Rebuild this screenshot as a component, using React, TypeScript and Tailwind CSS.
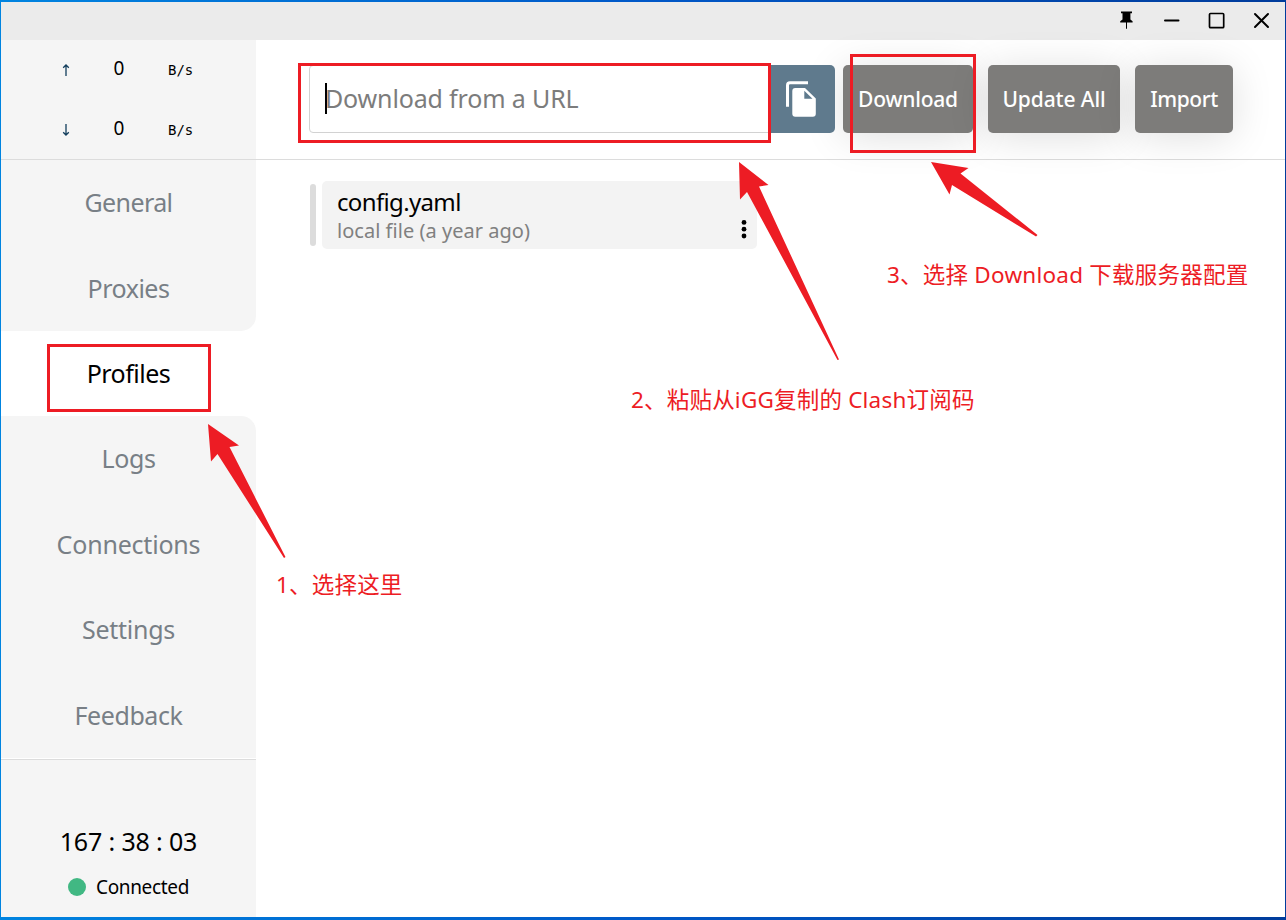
import React from "react";

const NAV = [
  { label: "General", cls: "tracking-[-0.6px]" },
  { label: "Proxies", cls: "rounded-br-[15px] tracking-[-0.5px]" },
  { label: "Profiles", cls: "tracking-[-0.5px]" },
  { label: "Logs", cls: "rounded-tr-[15px] tracking-[-0.4px]" },
  { label: "Connections", cls: "tracking-[-0.2px]" },
  { label: "Settings", cls: "tracking-[-0.25px]" },
  { label: "Feedback", cls: "tracking-[-0.4px]" },
];

function Speed({ arrow }: { arrow: "up" | "down" }) {
  return (
    <div className="flex h-[60px] items-center pb-[4px]">
      <svg className="ml-[60px] mt-[3px]" width="10" height="14" viewBox="0 0 10 14" fill="none" stroke="#123d5c" strokeWidth="1.3">
        {arrow === "up" ? <path d="M5 13V2M2.2 4.8L5 2l2.8 2.8" /> : <path d="M5 1v11M2.2 9.2L5 12l2.8-2.8" />}
      </svg>
      <span className="ml-[41px] w-[14px] text-center text-[19px] leading-[24px]">0</span>
      <span className="ml-[42px] mt-[3px] font-['DejaVu_Sans_Mono',monospace] text-[14px] leading-[20px]">B/s</span>
    </div>
  );
}

function Action({ label, cls }: { label: string; cls: string }) {
  return (
    <button className={"flex h-[68px] items-center justify-center rounded-[5px] bg-[#7d7c7a] pt-px text-[21px] font-medium text-white shadow-[0_4px_40px_rgba(0,0,0,0.13)] " + cls}>
      {label}
    </button>
  );
}

export default function App() {
  return (
    <div className="relative h-[920px] w-[1286px] overflow-hidden bg-linear-to-r from-[#0084e0] via-[#0058c8] to-[#003c9c] pt-[2px] pr-px pb-[3px] pl-px font-['Noto_Sans','Noto_Sans_CJK_SC',sans-serif] text-black">
      <div className="flex h-full flex-col bg-white">
        <header className="flex h-[38px] shrink-0 items-center justify-end bg-[#ebebeb]">
          <svg width="160" height="38" viewBox="1117 2 160 38" className="mr-[8px]" fill="none" stroke="#000" strokeLinecap="round">
            <path fill="#000" stroke="none" d="M1121 11.5h11v1.7h-1.6v6.3l2.2 1.8v1.2h-5.6v6.3h-1v-6.3h-5.8v-1.2l2.3-1.8v-6.3h-1.5z" />
            <path strokeWidth="2" d="M1165 20.5h13.5" />
            <rect x="1209.5" y="13.5" width="14.2" height="14.2" rx="1" strokeWidth="1.7" />
            <path strokeWidth="2" d="M1255 14l13 13M1268 14l-13 13" />
          </svg>
        </header>
        <div className="flex min-h-0 flex-1">
          <aside className="flex w-[255px] shrink-0 flex-col">
            <div className="h-[120px] border-b border-[#dcdcdc] bg-[#f5f5f5]">
              <Speed arrow="up" />
              <Speed arrow="down" />
            </div>
            <nav className="flex h-[598px] flex-col">
              {NAV.map((n) => (
                <div
                  key={n.label}
                  className={
                    "flex flex-1 items-center justify-center pb-px text-[25px] leading-[34px] " +
                    (n.label === "Profiles" ? "bg-white text-black " : "bg-[#f5f5f5] text-[#787f86] ") +
                    n.cls
                  }
                >
                  {n.label}
                </div>
              ))}
            </nav>
            <div className="mt-px flex flex-1 flex-col items-center border-t border-[#dcdcdc] bg-[#f5f5f5] pt-[64px]">
              <div className="text-[25px] leading-[34px] tracking-[-0.15px]">167 : 38 : 03</div>
              <div className="mt-[16px] flex items-center gap-[10px] text-[19px] leading-[26px] tracking-[-0.35px]">
                <span className="h-[18px] w-[18px] rounded-full bg-[#41b883]" />
                Connected
              </div>
            </div>
          </aside>
          <main className="flex flex-1 flex-col">
            <div className="flex h-[120px] items-start border-b border-[#dcdcdc] pt-[25px] pl-[53px]">
              <div className="flex h-[68px] w-[462px] items-center rounded-l-[4px] border border-[#d2d2d2] pb-[2px] pl-[15px]">
                <span className="h-[31px] w-[2px] bg-black" />
                <span className="-ml-[2px] whitespace-nowrap text-[25px] leading-[34px] tracking-[-0.15px] text-[#7c7c7c]">Download from a URL</span>
              </div>
              <div className="z-10 flex h-[68px] w-[64px] items-center rounded-r-[5px] bg-[#5f7a8d] pl-[15px]">
                <svg width="30" height="36" viewBox="0 0 30 36" fill="none">
                  <path d="M1.5 25.800V4.300Q1.500 1.800 4 1.800H22" stroke="#fff" strokeWidth="3" />
                  <path fillRule="evenodd" fill="#fff" d="M9.300 7H19L29.800 17.500V32.700a3 3 0 0 1-3 3H9.300a3 3 0 0 1-3-3V10a3 3 0 0 1 3-3zm9 2.700V17.800h8.200z" />
                </svg>
              </div>
              <Action label="Download" cls="ml-[8px] w-[130px] tracking-[-0.2px]" />
              <Action label="Update All" cls="ml-[15px] w-[132px] tracking-[-0.1px]" />
              <Action label="Import" cls="ml-[15px] w-[98px] tracking-[-0.4px]" />
            </div>
            <div className="flex items-center pt-[21px] pl-[54px]">
              <div className="h-[62px] w-[6px] rounded-[3px] bg-[#dcdcdc]" />
              <div className="ml-[6px] flex h-[68px] w-[435px] justify-between rounded-[5px] bg-[#f3f3f3] pl-[15px]">
                <div className="flex flex-col pt-[5px]">
                  <div className="text-[24px] leading-[32px] tracking-[-0.65px]">config.yaml</div>
                  <div className="text-[20px] leading-[26px] tracking-[0.03px] text-[#808080]">local file (a year ago)</div>
                </div>
                <svg className="mt-[38px] mr-[9.500px]" width="8" height="20" viewBox="0 0 8 20">
                  <circle cx="4" cy="3.4" r="2.4" />
                  <circle cx="4" cy="10.2" r="2.4" />
                  <circle cx="4" cy="17" r="2.4" />
                </svg>
              </div>
            </div>
          </main>
        </div>
      </div>

      <div className="absolute top-[63px] left-[298px] z-20 h-[80px] w-[473px] border-[3px] border-[#ed1c24]" />
      <div className="absolute top-[54px] left-[850px] z-20 h-[99px] w-[126px] border-[3px] border-[#ed1c24]" />
      <div className="absolute top-[344px] left-[47px] z-20 h-[68px] w-[164px] border-[3px] border-[#ed1c24]" />
      <svg className="absolute top-0 left-0 z-20" width="1286" height="920" viewBox="0 0 1286 920" fill="#ed1c24">
        <path d="M208 424L239 445.500L229.500 447L285.500 557L284 558L217.500 454L211 461.500Z" />
        <path d="M739 162L768.500 185L759 186.500L839 359.500L837.500 360L747 192L740 199.500Z" />
        <path d="M931 162L968.500 168L960.500 173.500L1037.500 235L1036 236.500L952 185L949.500 194.500Z" />
      </svg>
      <div className="absolute top-[569px] left-[276px] whitespace-nowrap text-[22.5px] leading-[32px] tracking-[0.2px] text-[#ed1c24]">1、选择这里</div>
      <div className="absolute top-[384px] left-[631px] whitespace-nowrap text-[22.5px] leading-[32px] tracking-[0.2px] text-[#ed1c24]">2、粘贴从iGG复制的 Clash订阅码</div>
      <div className="absolute top-[259px] left-[887px] whitespace-nowrap text-[22.5px] leading-[32px] tracking-[0.23px] text-[#ed1c24]">3、选择 Download 下载服务器配置</div>
    </div>
  );
}
